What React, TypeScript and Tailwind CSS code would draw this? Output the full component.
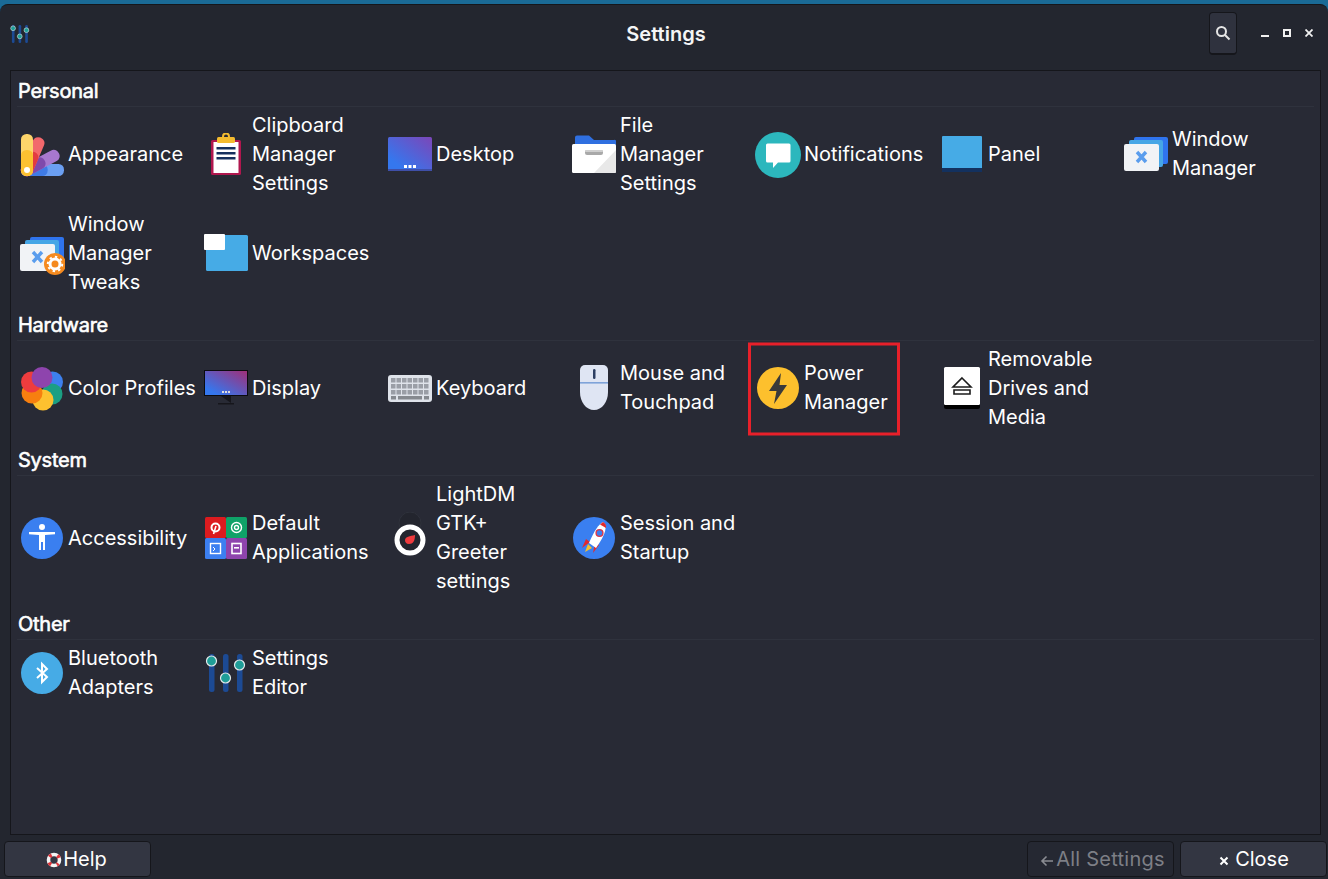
import type { ReactNode } from 'react'

const SliderIcon = ({ size }: { size: number }) => (
  <svg width={size} height={size} viewBox="0 0 42 42">
    <rect x="4" y="2" width="5.5" height="38" rx="2.5" fill="#1c4a94" />
    <rect x="18" y="2" width="5.5" height="38" rx="2.5" fill="#1c4a94" />
    <rect x="32" y="2" width="5.5" height="38" rx="2.5" fill="#1c4a94" />
    <circle cx="6.5" cy="9" r="5" fill="#1f9e98" stroke="#e4eaec" strokeWidth="1.2" />
    <circle cx="20.5" cy="26" r="5" fill="#1f9e98" stroke="#e4eaec" strokeWidth="1.2" />
    <circle cx="34.5" cy="13" r="5" fill="#1f9e98" stroke="#e4eaec" strokeWidth="1.2" />
  </svg>
)

const Petal = ({ angle, length, light, dark }: { angle: number; length: number; light: string; dark: string }) => (
  <g transform={`rotate(${angle} 7 37)`}>
    <rect x="1" y={43 - length} width="12" height={length} rx="5.5" fill={light} />
    <rect x="1" y={43 - length * 0.62} width="12" height={length * 0.62} rx="5.5" fill={dark} />
  </g>
)

const Appearance = () => (
  <svg width="44" height="44" viewBox="0 0 44 44">
    <Petal angle={90} length={43} light="#6b9ff2" dark="#3f7be6" />
    <Petal angle={62} length={42} light="#a878cf" dark="#7f49ab" />
    <Petal angle={23} length={41} light="#f2686c" dark="#e33b40" />
    <Petal angle={0} length={42} light="#fdd56b" dark="#fcc131" />
    <circle cx="7" cy="37" r="3" fill="#fff" />
  </svg>
)

const Clipboard = () => (
  <svg width="44" height="44" viewBox="0 0 44 44">
    <rect x="7" y="7" width="30" height="35" rx="1.5" fill="#b0174e" />
    <rect x="9.5" y="9" width="25" height="31" fill="#fff" />
    <rect x="13" y="4" width="18" height="6" rx="1.5" fill="#f4bb2f" />
    <circle cx="22" cy="3.5" r="3" fill="none" stroke="#f4bb2f" strokeWidth="2" />
    <rect x="12.5" y="14" width="19" height="2.5" fill="#16305e" />
    <rect x="12.5" y="19" width="19" height="2.5" fill="#16305e" />
    <rect x="12.5" y="24" width="19" height="2.5" fill="#16305e" />
  </svg>
)

const Desktop = () => (
  <svg width="44" height="44" viewBox="0 0 44 44">
    <defs>
      <linearGradient id="desk" x1="0" y1="1" x2="1" y2="0">
        <stop offset="0.2" stopColor="#3577ee" />
        <stop offset="1" stopColor="#7c46b8" />
      </linearGradient>
    </defs>
    <rect x="0" y="4" width="44" height="34" rx="1.5" fill="url(#desk)" />
    <rect x="0" y="36" width="44" height="2" fill="#3f4fa8" />
    <rect x="16" y="32" width="3" height="3" fill="#fff" />
    <rect x="20.5" y="32" width="3" height="3" fill="#fff" />
    <rect x="25" y="32" width="3" height="3" fill="#fff" />
  </svg>
)

const FileManager = () => (
  <svg width="44" height="44" viewBox="0 0 44 44">
    <path d="M3 16 V4.5 A2 2 0 0 1 5 2.5 H17 L22 7 H42 A1.5 1.5 0 0 1 44 9 V16 Z" fill="#2f6fe0" />
    <rect x="0" y="11" width="44" height="29" rx="1.5" fill="#fff" />
    <path d="M22 40 L44 17 V39 A1.5 1.5 0 0 1 42.5 40 Z" fill="#e8e8e8" />
    <rect x="13" y="17" width="18" height="5" rx="2" fill="#a9a9a9" />
    <rect x="13" y="17" width="18" height="2" rx="1" fill="#cfcfcf" />
  </svg>
)

const Notifications = () => (
  <svg width="46" height="46" viewBox="0 0 46 46">
    <circle cx="23" cy="23" r="23" fill="#2cb7bd" />
    <path d="M11 13 A1.5 1.5 0 0 1 12.5 11.5 H34 A1.5 1.5 0 0 1 35.5 13 V29 A1.5 1.5 0 0 1 34 30.5 H23 L18 36 V30.5 H12.5 A1.5 1.5 0 0 1 11 29 Z" fill="#fff" />
  </svg>
)

const Panel = () => (
  <svg width="44" height="44" viewBox="0 0 44 44">
    <rect x="2" y="3" width="40" height="36" rx="1" fill="#46abe6" />
    <rect x="2" y="35" width="40" height="4" fill="#13315f" />
  </svg>
)

const WindowManager = ({ gear }: { gear?: boolean }) => (
  <svg width="46" height="44" viewBox="0 0 46 44">
    <rect x="11" y="5" width="34" height="27" rx="2" fill="#2f74ee" />
    <rect x="6" y="8" width="34" height="27" rx="2" fill="#46a6e6" />
    <rect x="1" y="12" width="35" height="27" rx="2" fill="#f1f3f6" />
    <path d="M14 20 L23 30 M23 20 L14 30" stroke="#5a9ded" strokeWidth="3.4" />
    {gear && (
      <>
        <circle cx="36" cy="32" r="11" fill="#f58a1f" />
        <circle cx="36" cy="32" r="5" fill="none" stroke="#fff" strokeWidth="3" />
        <circle cx="36" cy="32" r="7.2" fill="none" stroke="#fff" strokeWidth="2" strokeDasharray="2.4 3.2" />
      </>
    )}
  </svg>
)

const Workspaces = () => (
  <svg width="46" height="44" viewBox="0 0 46 44">
    <rect x="3" y="3" width="42" height="36" rx="1.5" fill="#46abe6" />
    <rect x="1" y="2" width="21" height="16" rx="1" fill="#fff" />
  </svg>
)

const ColorProfiles = () => (
  <svg width="44" height="44" viewBox="0 0 44 44">
    <circle cx="32.5" cy="15" r="10.5" fill="#3d80ee" />
    <circle cx="32" cy="27" r="10.5" fill="#1b9f83" />
    <circle cx="23" cy="33" r="10.5" fill="#fdc12f" />
    <circle cx="12" cy="26" r="10.5" fill="#f77f0f" />
    <circle cx="11.5" cy="15" r="10.5" fill="#ee3c3e" />
    <circle cx="22" cy="10.5" r="10.5" fill="#8e44ad" />
  </svg>
)

const Display = () => (
  <svg width="44" height="44" viewBox="0 0 44 44">
    <defs>
      <linearGradient id="disp" x1="0" y1="1" x2="1" y2="0">
        <stop offset="0.15" stopColor="#3577ee" />
        <stop offset="1" stopColor="#a02f78" />
      </linearGradient>
    </defs>
    <rect x="0" y="3" width="44" height="26" fill="#0b0b0f" />
    <rect x="1" y="4" width="42" height="24" fill="url(#disp)" />
    <path d="M17 29 H27 V36 Z" fill="#16161c" />
    <rect x="14" y="36" width="16" height="1.5" fill="#16161c" />
    <rect x="18" y="24" width="2" height="2" fill="#ddd" />
    <rect x="21" y="24" width="2" height="2" fill="#ddd" />
    <rect x="24" y="24" width="2" height="2" fill="#ddd" />
  </svg>
)

const Keyboard = () => (
  <svg width="44" height="44" viewBox="0 0 44 44">
    <rect x="0" y="8" width="44" height="27" rx="3" fill="#dfe3ea" />
    {[11, 17, 23].map((y) => (
      <g key={y}>
        {[3, 8.5, 14, 19.5, 25, 30.5, 36].map((x) => (
          <rect key={x} x={x} y={y} width="4.5" height="4.5" fill="#9a9ea6" />
        ))}
      </g>
    ))}
    <rect x="3" y="29" width="5" height="3.5" fill="#85898f" />
    <rect x="10" y="29" width="24" height="3.5" fill="#85898f" />
    <rect x="36" y="29" width="5" height="3.5" fill="#85898f" />
  </svg>
)

const Mouse = () => (
  <svg width="44" height="46" viewBox="0 0 44 46">
    <path d="M8 5 A5 5 0 0 1 13 0 H31 A5 5 0 0 1 36 5 V27 C36 37 30 45 22 45 C14 45 8 37 8 27 Z" fill="#dfe5f3" />
    <rect x="8" y="17" width="28" height="1.6" fill="#7fa3d9" />
    <rect x="21" y="4" width="2.5" height="10" rx="1.2" fill="#2c3e62" />
  </svg>
)

const Power = () => (
  <svg width="44" height="44" viewBox="0 0 44 44">
    <circle cx="22" cy="22" r="21" fill="#fdc02d" />
    <path d="M25 7 L13 25 H20.5 L18 38 L31 19 H23.5 Z" fill="#3a3a3a" />
  </svg>
)

const Eject = () => (
  <svg width="44" height="46" viewBox="0 0 44 46">
    <rect x="4" y="5" width="36" height="38" rx="2" fill="#000" />
    <rect x="4" y="1" width="36" height="38" rx="1.5" fill="#fff" />
    <path d="M22 12 L31 21 H13 Z M14 24 H30 V28 H14 Z" fill="none" stroke="#1c1c1c" strokeWidth="1.6" />
  </svg>
)

const Accessibility = () => (
  <svg width="44" height="44" viewBox="0 0 44 44">
    <circle cx="22" cy="22" r="21" fill="#3a7ff0" />
    <circle cx="22" cy="11" r="3" fill="#fff" />
    <path d="M9 16 H35 V18.2 L25 19 V34 H23 V26 H21 V34 H19 V19 L9 18.2 Z" fill="#fff" />
  </svg>
)

const DefaultApps = () => (
  <svg width="44" height="44" viewBox="0 0 44 44">
    <rect x="1" y="1" width="21" height="21" rx="1.5" fill="#dc1b1f" />
    <rect x="22" y="1" width="21" height="21" rx="1.5" fill="#0fa268" />
    <rect x="1" y="22" width="21" height="21" rx="1.5" fill="#3c7ff0" />
    <rect x="22" y="22" width="21" height="21" rx="1.5" fill="#8e44ad" />
    <circle cx="11.5" cy="11.5" r="4" fill="none" stroke="#fff" strokeWidth="2" />
    <path d="M12 10 L9.5 18" stroke="#fff" strokeWidth="1.6" />
    <circle cx="32.5" cy="11.5" r="2" fill="none" stroke="#fff" strokeWidth="1.4" />
    <circle cx="32.5" cy="11.5" r="5" fill="none" stroke="#fff" strokeWidth="1.4" />
    <rect x="6.5" y="27.5" width="10" height="10" fill="none" stroke="#fff" strokeWidth="1.4" />
    <path d="M9 31 L11 33 L9 35" stroke="#fff" strokeWidth="1" fill="none" />
    <rect x="28" y="27.5" width="9" height="10" fill="none" stroke="#fff" strokeWidth="1.6" />
    <rect x="30" y="31" width="5" height="1.6" fill="#fff" />
  </svg>
)

const LightDM = () => (
  <svg width="44" height="52" viewBox="0 0 44 52">
    <circle cx="22" cy="11" r="11" fill="#23252e" stroke="#2f323c" strokeWidth="1" />
    <circle cx="22" cy="28" r="13" fill="#23252e" stroke="#fff" strokeWidth="5" />
    <path d="M27 23 C27 29 25 32 21 32 C18 32 17 30 17 28 C17 25 22 24 27 23 Z" fill="#ef3b3e" />
  </svg>
)

const Rocket = () => (
  <svg width="44" height="44" viewBox="0 0 44 44">
    <circle cx="22" cy="22" r="21" fill="#3a7ff0" />
    <path d="M10 32 L14 23 L18 26 Z" fill="#e22a2d" />
    <path d="M21 37 L27 29 L23 26 Z" fill="#e22a2d" />
    <path d="M13 36 L16 28 L20 32 Z" fill="#f6c12e" />
    <path d="M31 6 C36 9 34 18 24 32 L17 27 C22 15 27 8 31 6 Z" fill="#fff" />
    <path d="M31 6 C33 7 34.5 9 34 12 L28 8.5 Z" fill="#e22a2d" />
    <circle cx="27.5" cy="17" r="3.4" fill="#3a7ff0" stroke="#d9374a" strokeWidth="1.4" />
  </svg>
)

const Bluetooth = () => (
  <svg width="44" height="44" viewBox="0 0 44 44">
    <circle cx="22" cy="22" r="21" fill="#46abe6" />
    <path d="M17 17 L27 26 L22 31 V13 L27 18 L17 27" fill="none" stroke="#fff" strokeWidth="2" />
  </svg>
)

type Entry = { lines: string[]; icon: ReactNode; marked?: boolean }

const sections: { title: string; items: Entry[] }[] = [
  {
    title: 'Personal',
    items: [
      { lines: ['Appearance'], icon: <Appearance /> },
      { lines: ['Clipboard', 'Manager', 'Settings'], icon: <Clipboard /> },
      { lines: ['Desktop'], icon: <Desktop /> },
      { lines: ['File', 'Manager', 'Settings'], icon: <FileManager /> },
      { lines: ['Notifications'], icon: <Notifications /> },
      { lines: ['Panel'], icon: <Panel /> },
      { lines: ['Window', 'Manager'], icon: <WindowManager /> },
      { lines: ['Window', 'Manager', 'Tweaks'], icon: <WindowManager gear /> },
      { lines: ['Workspaces'], icon: <Workspaces /> },
    ],
  },
  {
    title: 'Hardware',
    items: [
      { lines: ['Color Profiles'], icon: <ColorProfiles /> },
      { lines: ['Display'], icon: <Display /> },
      { lines: ['Keyboard'], icon: <Keyboard /> },
      { lines: ['Mouse and', 'Touchpad'], icon: <Mouse /> },
      { lines: ['Power', 'Manager'], icon: <Power />, marked: true },
      { lines: ['Removable', 'Drives and', 'Media'], icon: <Eject /> },
    ],
  },
  {
    title: 'System',
    items: [
      { lines: ['Accessibility'], icon: <Accessibility /> },
      { lines: ['Default', 'Applications'], icon: <DefaultApps /> },
      { lines: ['LightDM', 'GTK+', 'Greeter', 'settings'], icon: <LightDM /> },
      { lines: ['Session and', 'Startup'], icon: <Rocket /> },
    ],
  },
  {
    title: 'Other',
    items: [
      { lines: ['Bluetooth', 'Adapters'], icon: <Bluetooth /> },
      { lines: ['Settings', 'Editor'], icon: <SliderIcon size={42} /> },
    ],
  },
]

function Item({ lines, icon, marked }: Entry) {
  return (
    <div className={`relative flex items-center ${lines.length === 2 ? 'pb-[1px]' : ''}`}>
      <div className="flex h-[46px] w-[48px] shrink-0 items-center justify-center">{icon}</div>
      <div className="whitespace-nowrap pl-[2px] leading-[29px] text-[#ffffff]">
        {lines.map((line) => (
          <div key={line}>{line}</div>
        ))}
      </div>
      {marked && (
        <div className="absolute left-[-6px] top-1/2 h-[93px] w-[152px] -translate-y-1/2 border-[3px] border-[#e8202a]" />
      )}
    </div>
  )
}

function FooterButton({ children, disabled }: { children: ReactNode; disabled?: boolean }) {
  return (
    <div
      className={`flex h-[36px] w-[147px] items-center justify-center rounded-[4px] border border-[#15161b] ${
        disabled ? 'bg-[#252832] pl-[4px] text-[#7d7f86]' : 'bg-[#333642] text-[#ffffff]'
      }`}
    >
      {children}
    </div>
  )
}

export default function App() {
  return (
    <div className="h-[879px] w-[1328px] overflow-hidden bg-[#1a6a96] pt-[4px] font-['Inter',sans-serif] text-[20px]">
      <div className="flex h-[875px] flex-col rounded-t-[8px] border-t border-[#15161b] bg-[#23262f]">
        <div className="relative flex h-[65px] shrink-0 items-center justify-center pb-[8px] pl-[4px]">
          <div className="absolute left-[10px] top-[19px]">
            <SliderIcon size={20} />
          </div>
          <div className="font-semibold text-[#f4f5f6]">Settings</div>
          <div className="absolute right-[91px] top-[7px] flex h-[43px] w-[28px] items-center justify-center rounded-[4px] border border-b-2 border-[#15161b] bg-[#2f323e]">
            <svg width="16" height="16" viewBox="0 0 16 16" fill="none" stroke="#e6e6e6" strokeWidth="2">
              <circle cx="6.5" cy="6.5" r="4.5" />
              <path d="M10 10 L14.5 14.5" />
            </svg>
          </div>
          <div className="absolute right-[15px] top-[24px] flex items-center gap-[14px]">
            <svg width="8" height="8" viewBox="0 0 8 8">
              <rect x="0" y="6" width="8" height="2" fill="#f0f0f0" />
            </svg>
            <svg width="8" height="8" viewBox="0 0 8 8" fill="none" stroke="#f0f0f0" strokeWidth="2">
              <rect x="1" y="1" width="6" height="6" />
            </svg>
            <svg width="8" height="8" viewBox="0 0 8 8" stroke="#f0f0f0" strokeWidth="1.8">
              <path d="M0.5 0.5 L7.5 7.5 M7.5 0.5 L0.5 7.5" />
            </svg>
          </div>
        </div>

        <div className="ml-[10px] mr-[7px] h-[765px] shrink-0 border border-[#15161b] bg-[#282a35] pl-[6px] pr-[6px] pt-[8px]">
          {sections.map((section) => (
            <div key={section.title} className="mb-[16px]">
              <div className="border-b border-[#2f323d] pb-[3px] pl-[1px] leading-[24px] tracking-[-0.25px] text-[#ffffff] [-webkit-text-stroke:0.6px_#ffffff]">
                {section.title}
              </div>
              <div className="mt-[4px] grid grid-cols-[repeat(7,184px)] items-center gap-y-[12px] px-[1px]">
                {section.items.map((item) => (
                  <Item key={item.lines.join(' ')} {...item} />
                ))}
              </div>
            </div>
          ))}
        </div>

        <div className="flex flex-1 items-start justify-between pl-[4px] pr-[1px] pt-[6px]">
          <FooterButton>
            <svg width="16" height="16" viewBox="0 0 16 16" className="ml-[-2px] mr-[1px] mt-[2px]">
              <circle cx="8" cy="8" r="5.5" fill="none" stroke="#f4f4f4" strokeWidth="3.6" />
              <circle cx="8" cy="8" r="5.5" fill="none" stroke="#e0353b" strokeWidth="3.6" strokeDasharray="3 5.64" strokeDashoffset="1.5" transform="rotate(45 8 8)" />
            </svg>
            <span>Help</span>
          </FooterButton>
          <div className="flex gap-[6px]">
            <FooterButton disabled>
              <svg width="14" height="14" viewBox="0 0 14 14" fill="none" stroke="#8a8c92" strokeWidth="1.6" className="mr-[2px] mt-[3px]">
                <path d="M13 7 H2 M6.5 2.5 L2 7 L6.5 11.5" />
              </svg>
              <span className="tracking-[0.25px]">All Settings</span>
            </FooterButton>
            <FooterButton>
              <svg width="12" height="12" viewBox="0 0 12 12" stroke="#ffffff" strokeWidth="2" className="mr-[5px] mt-[3px]">
                <path d="M2.5 2.5 L9.5 9.5 M9.5 2.5 L2.5 9.5" />
              </svg>
              <span>Close</span>
            </FooterButton>
          </div>
        </div>
      </div>
    </div>
  )
}
